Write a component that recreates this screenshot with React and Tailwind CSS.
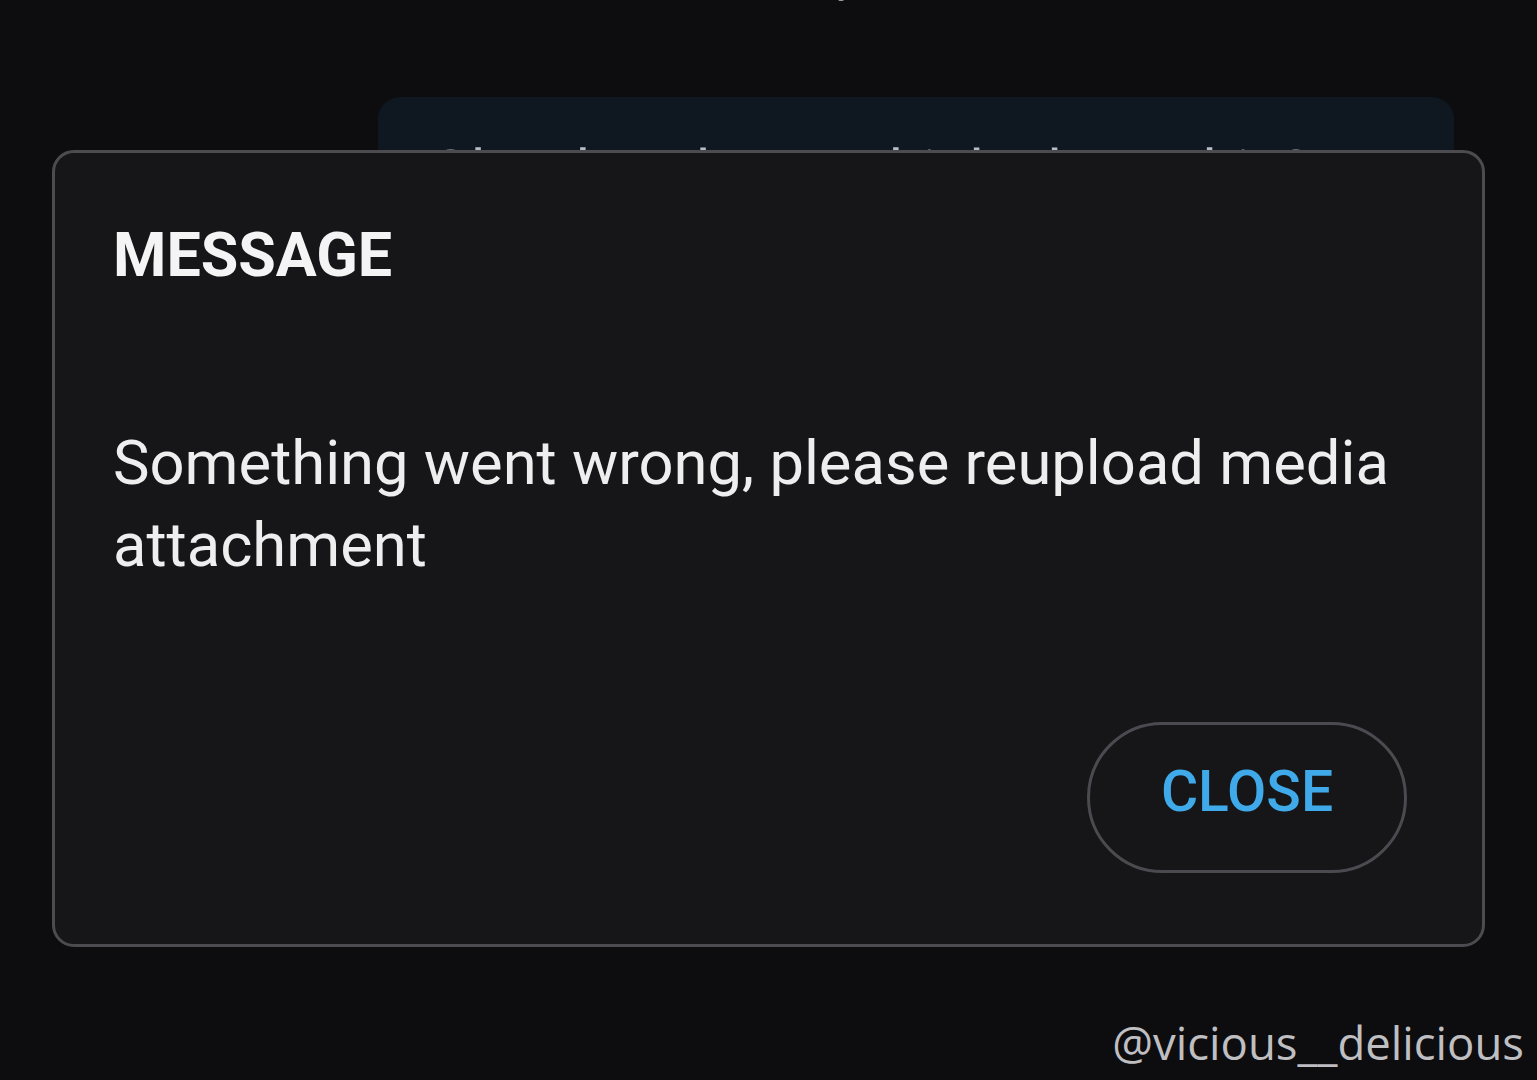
import React from "react";

const roboto = { fontFamily: "Roboto, 'Liberation Sans', sans-serif" };

export default function App() {
  return (
    <div className="relative w-[1537px] h-[1080px] overflow-hidden bg-[#0d0d10]" style={roboto}>
      {/* chat behind the dialog */}
      <div className="flex flex-col items-center">
        <p className="mt-[-44px] text-[40px] leading-[48px] text-[#9a9a9e]">Yesterday</p>
      </div>
      <div className="ml-[378px] mt-[93px] w-[1076px] h-[400px] rounded-[22px] bg-[#0f1820] pl-[52px] pt-[45px]">
        <p className="text-[60px] leading-[60px] text-[#b8bcc2]">Oh, what do you think about this?</p>
      </div>

      {/* dialog */}
      <div className="absolute left-[52px] top-[150px] w-[1433px] h-[797px] flex flex-col rounded-[22px] border-[3px] border-[#4b4b50] bg-[#161618] pl-[58px] pr-[60px] pt-[72px] pb-[71px]">
        <h2 className="text-[61px] leading-[61px] font-bold text-[#f4f4f5]">MESSAGE</h2>
        <p className="mt-[136px] text-[61.5px] leading-[82px] text-[#eeeeef]">
          Something went wrong, please reupload media attachment
        </p>
        <div className="mt-auto flex justify-end pr-[15px]">
          <button className="w-[320px] h-[151px] rounded-full border-[3px] border-[#4a4a50] flex items-center justify-center pb-[12px] text-[57px] leading-[57px] font-medium text-[#3fa9e9]">
            CLOSE
          </button>
        </div>
      </div>

      {/* watermark */}
      <p
        className="absolute right-[13px] bottom-[8px] text-[45.5px] leading-[60px] text-[#bfbfc1]"
        style={{ fontFamily: "'Open Sans', 'Noto Sans', sans-serif" }}
      >
        @vicious__delicious
      </p>
    </div>
  );
}
